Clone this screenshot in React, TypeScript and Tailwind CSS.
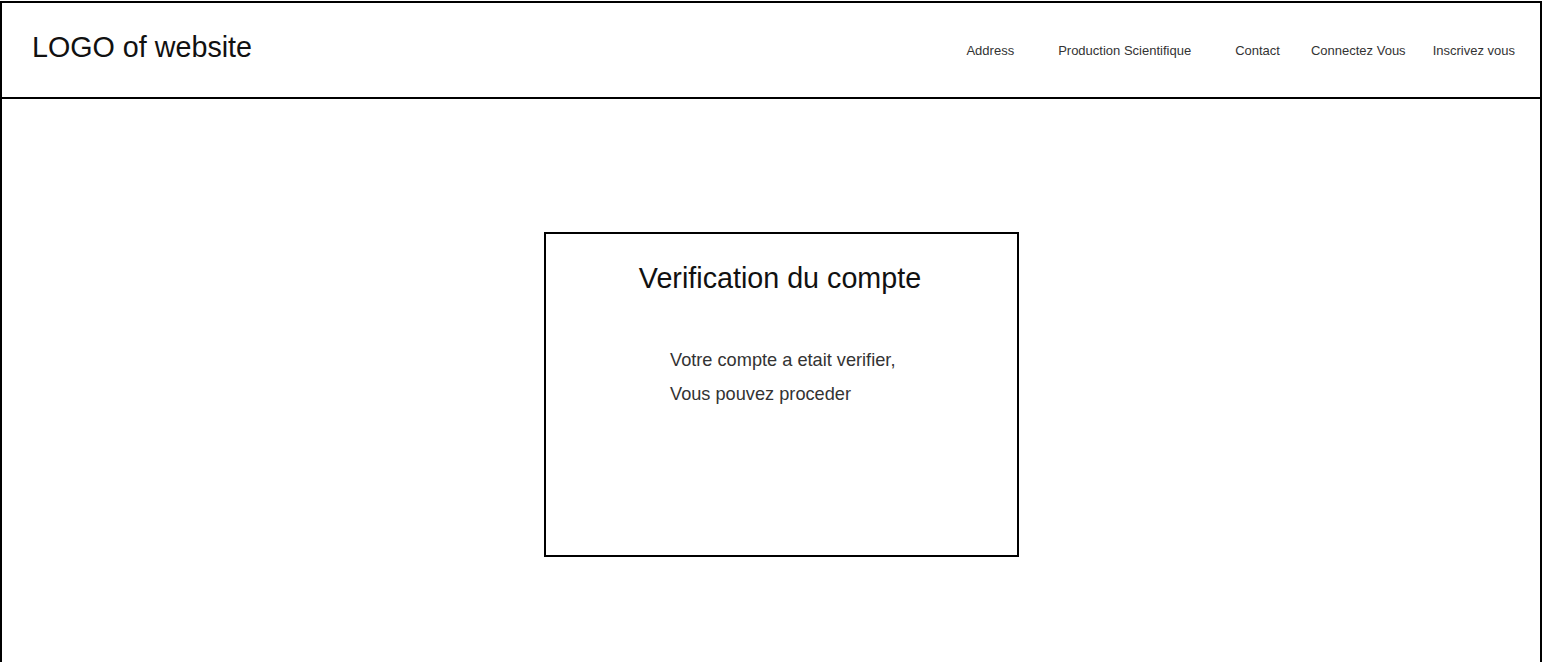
const navItems = [
  { label: 'Address', className: 'mr-[44px]' },
  { label: 'Production Scientifique', className: 'mr-[44px]' },
  { label: 'Contact', className: 'mr-[31px]' },
  { label: 'Connectez Vous', className: 'mr-[27px]' },
  { label: 'Inscrivez vous', className: '' },
]

export default function App() {
  return (
    <div className="h-[662px] overflow-hidden bg-white font-['Liberation_Sans',Arial,sans-serif]">
      <div className="mt-px h-[700px] w-[1542px] border-2 border-b-0 border-black">
        {/* Header */}
        <header className="flex h-[96px] items-center justify-between border-b-2 border-black pl-[30px] pr-[25px]">
          <div className="-mt-[6px] text-[28.7px] leading-none text-[#111]">LOGO of website</div>
          <nav className="mt-[2px] flex items-center text-[13px] text-[#333]">
            {navItems.map((item) => (
              <a key={item.label} href="#" className={item.className}>
                {item.label}
              </a>
            ))}
          </nav>
        </header>

        {/* Content */}
        <main className="pt-[133px] pl-[542px]">
          <div className="h-[325px] w-[475px] border-2 border-black">
            <h1 className="mt-[27px] pr-[3px] text-center text-[28.7px] leading-[34px] text-[#111]">
              Verification du compte
            </h1>
            <div className="mt-[48px] pl-[124px] text-[18.2px] leading-[34px] text-[#333]">
              <p>Votre compte a etait verifier,</p>
              <p>Vous pouvez proceder</p>
            </div>
          </div>
        </main>
      </div>
    </div>
  )
}
